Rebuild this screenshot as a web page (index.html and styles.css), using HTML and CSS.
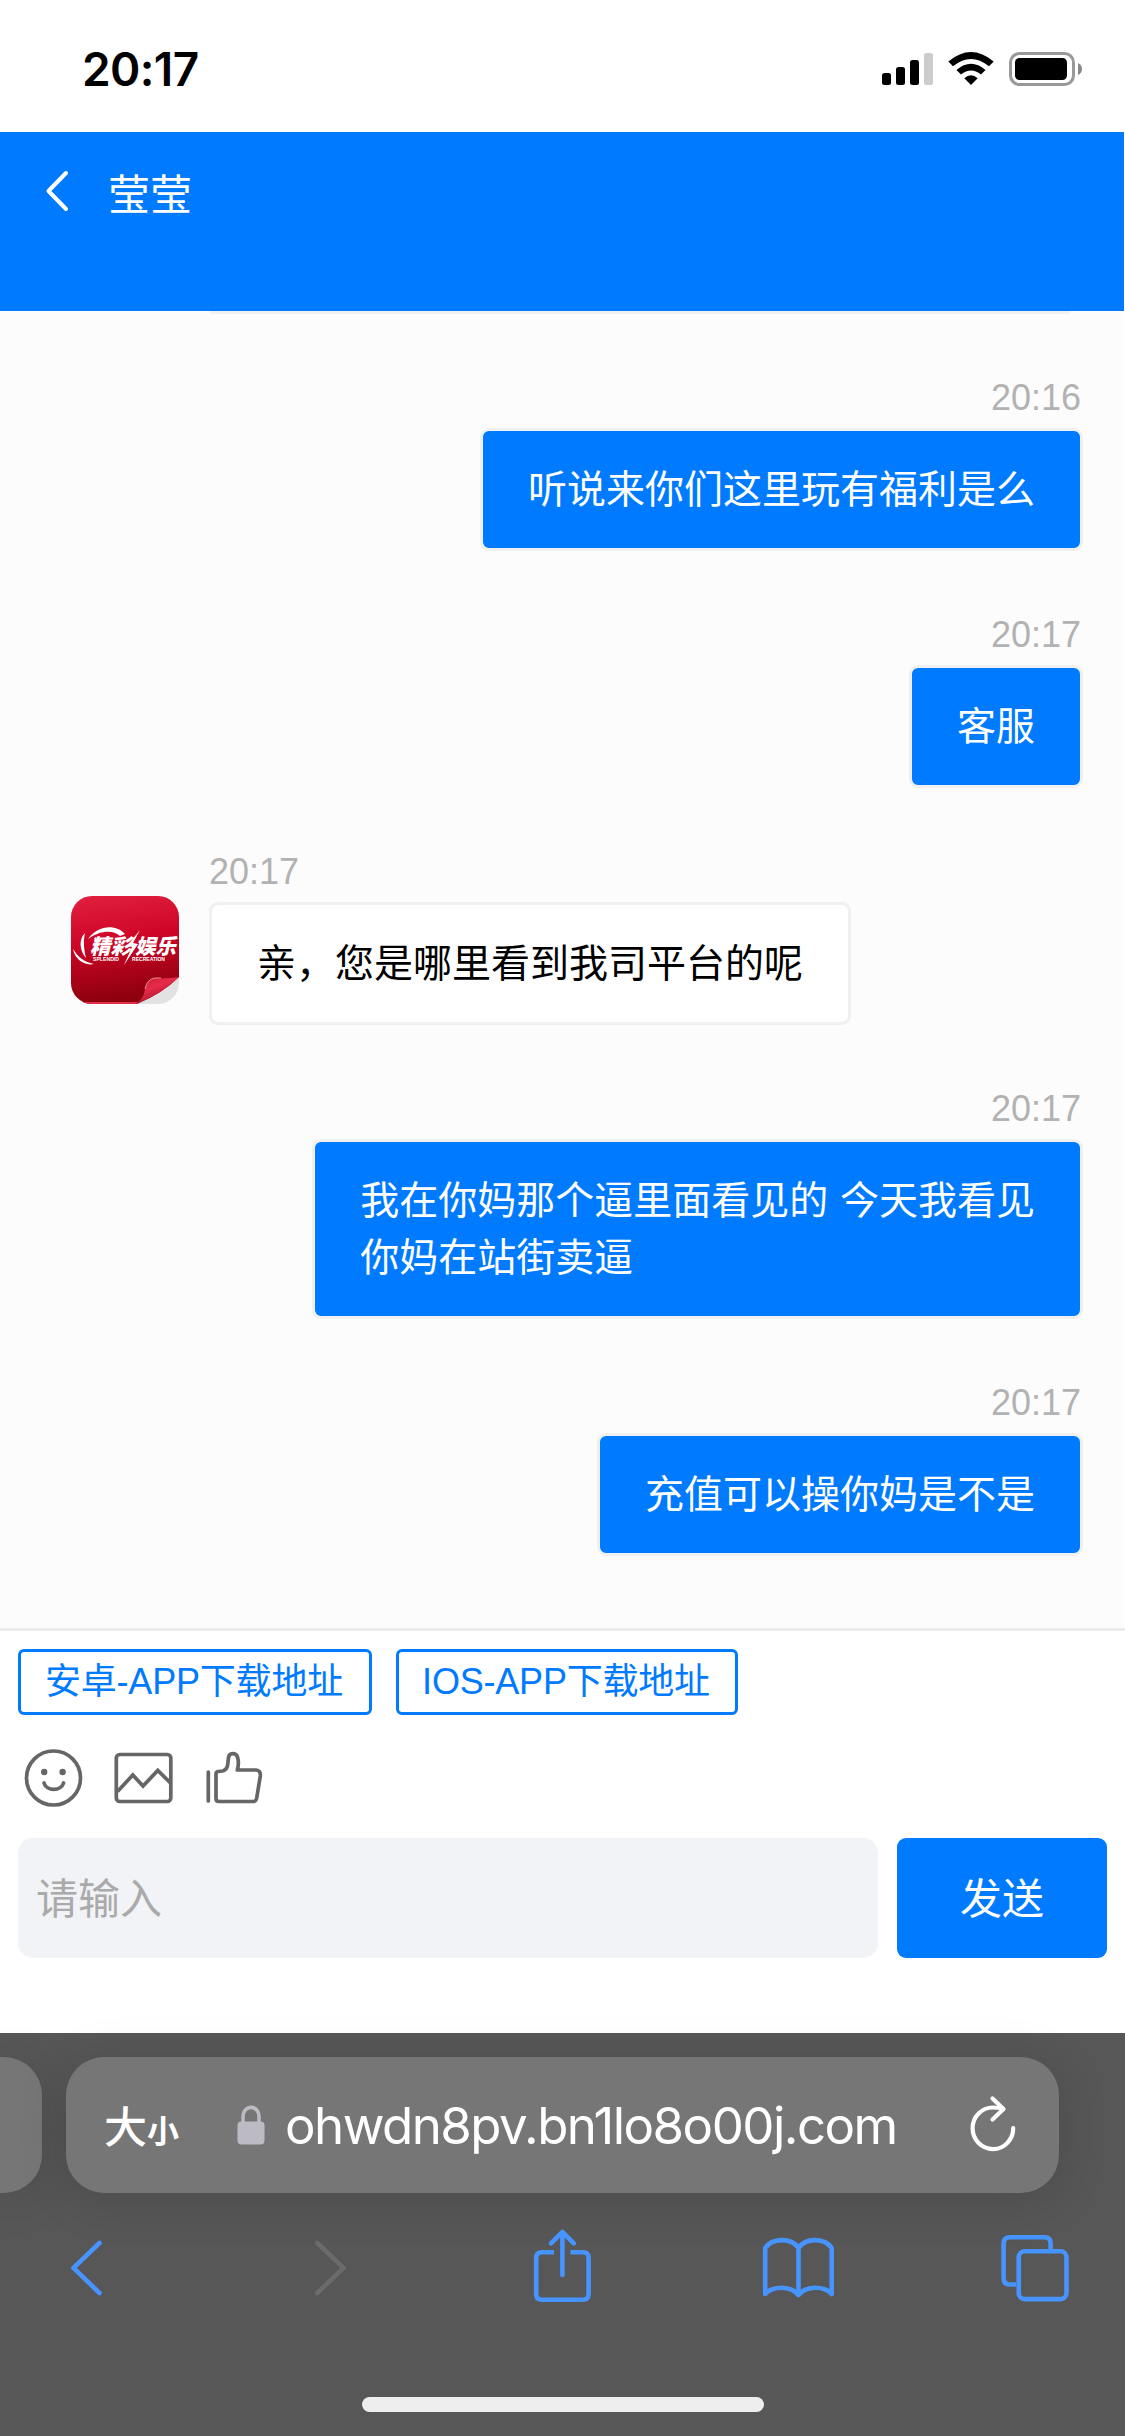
FILE: index.html
```html
<!DOCTYPE html>
<html lang="zh-CN">
<head>
<meta charset="utf-8">
<title>莹莹</title>
<link rel="stylesheet" href="styles.css">
</head>
<body>
<div class="status">
  <span class="clock">20:17</span>
  <svg class="indicators" width="202" height="36" viewBox="881 51 202 36">
    <rect x="882" y="73" width="9" height="12" rx="2.5"/>
    <rect x="896" y="67" width="9" height="18" rx="2.5"/>
    <rect x="910" y="60" width="9" height="25" rx="2.5"/>
    <rect x="924" y="53" width="9" height="32" rx="2.5" fill="#ccc"/>
    <path d="M948.3 61.5Q971 42.500 993.700 61.500L989 66.300Q971 51.500 953 66.300ZM956.500 70Q971 57.500 985.500 70L981 74.500Q971 66.500 961 74.500ZM964.300 78.300Q971 72 977.700 78.300L971 85Z"/>
    <rect x="1010.500" y="53.500" width="63" height="31" rx="9" fill="none" stroke="#999" stroke-width="3"/>
    <rect x="1015" y="58" width="52" height="22" rx="4.500"/>
    <path d="M1078 63Q1082 65 1082 69T1078 75Z" fill="#888"/>
  </svg>
</div>
<header class="header">
  <svg class="back" width="24" height="44" viewBox="45 169 24 44"><path d="M66 173L48.500 191L66 209" fill="none" stroke="#fff" stroke-width="4" stroke-linecap="round" stroke-linejoin="round"/></svg>
  <h1 class="title">莹莹</h1>
</header>
<main class="chat">
  <div class="clipped"></div>
  <section class="msg mine"><time>20:16</time><p>听说来你们这里玩有福利是么</p></section>
  <section class="msg mine"><time>20:17</time><p>客服</p></section>
  <section class="msg theirs">
    <svg class="avatar" width="108" height="108" viewBox="0 0 108 108">
      <defs>
        <linearGradient id="red" x1="0" y1="0" x2=".15" y2="1"><stop offset="0" stop-color="#e0213f"/><stop offset=".45" stop-color="#cf0527"/><stop offset="1" stop-color="#8d000e"/></linearGradient>
        <linearGradient id="curl" x1="0" y1="0" x2=".6" y2="1"><stop offset="0" stop-color="#c81734"/><stop offset=".45" stop-color="#e62b4b"/><stop offset="1" stop-color="#a80c22"/></linearGradient>
        <clipPath id="tile"><rect width="108" height="108" rx="21"/></clipPath>
      </defs>
      <g clip-path="url(#tile)">
        <rect width="108" height="108" fill="#e2e2e2"/>
        <path d="M0 0H108V81Q92 97 66 108H0Z" fill="url(#red)"/>
        <path d="M0 107H66" stroke="#e0304a" stroke-width="2"/>
        <path d="M108 81Q95 83 84 82Q76 83 74 93Q73 103 64 108Q90 99 108 81Z" fill="url(#curl)"/>
        <path d="M90 82H84Q76 83 74 93" fill="none" stroke="#e98a98" stroke-width="1"/>
      </g>
      <g fill="#fff">
        <path d="M17 43C26 30 44 27 54 38L49 40C42 33 27 35 17 43Z"/>
        <path d="M14 37C7 44 9 55 15 62C13 53 12 46 14 37Z"/>
        <path d="M2 53C4 64 14 70 23 68C13 66 7 61 2 53Z"/>
        <path d="M69 34L56 50L61 51L53 69L67 48L62 47Z"/>
      </g>
      <g class="logo-text" fill="#fff"><text x="19" y="58" textLength="41" lengthAdjust="spacingAndGlyphs">精彩</text><text x="64" y="58" textLength="41" lengthAdjust="spacingAndGlyphs">娱乐</text></g>
      <g class="logo-sub" fill="#fff"><text x="22" y="65" textLength="26" lengthAdjust="spacingAndGlyphs">SPLENDID</text><text x="61" y="65" textLength="33" lengthAdjust="spacingAndGlyphs">RECREATION</text></g>
    </svg>
    <div class="body"><time>20:17</time><p>亲，您是哪里看到我司平台的呢</p></div>
  </section>
  <section class="msg mine"><time>20:17</time><p>我在你妈那个逼里面看见的 今天我看见<br>你妈在站街卖逼</p></section>
  <section class="msg mine"><time>20:17</time><p>充值可以操你妈是不是</p></section>
</main>
<footer class="composer">
  <div class="links"><a class="link android">安卓-APP下载地址</a><a class="link ios">IOS-APP下载地址</a></div>
  <svg class="tools" width="246" height="62" viewBox="18 1747 246 62" fill="none" stroke="#666" stroke-width="3.700">
    <circle cx="53.500" cy="1778" r="27"/>
    <circle cx="44.200" cy="1772" r="3.200" fill="#666" stroke="none"/><circle cx="62.600" cy="1772" r="3.200" fill="#666" stroke="none"/>
    <path d="M44 1783C46.500 1791.500 61 1791.500 63.600 1783" stroke-linecap="round"/>
    <rect x="116.300" y="1754.500" width="54.500" height="47" rx="3.500"/>
    <path d="M117.500 1791.500L132.800 1775L143 1786L157.800 1770.500L170.500 1783"/>
    <path d="M208.300 1772V1801" stroke-linecap="round"/>
    <path d="M216 1774Q216 1772 218 1771.500L222.500 1771Q227 1770 227.700 1764.500L228.500 1757.500C229 1752.500 236 1752.500 237.500 1757C239 1762 238.500 1766 237.300 1770H256Q260.800 1770.300 260.300 1776L256.700 1798Q256 1801.500 253.500 1801.500H219Q216 1801.500 216 1798.500Z" stroke-linejoin="round"/>
  </svg>
  <div class="entry"><div class="field">请输入</div><div class="send">发送</div></div>
</footer>
<div class="browser">
  <div class="tabs">
    <div class="prev-tab"></div>
    <div class="url-bar">
      <span class="text-size"><span class="big">大</span><span class="small">小</span></span>
      <svg class="lock" width="28" height="41" viewBox="0 0 28 41"><path d="M6 20V12C6 -.800 22 -.800 22 12V20" fill="none" stroke="#bcbac3" stroke-width="3.600"/><rect x=".500" y="16.500" width="27" height="23" rx="4" fill="#bcbac3"/></svg>
      <span class="host">ohwdn8pv.bn1lo8o00j.com</span>
      <svg class="reload" width="48" height="58" viewBox="969 2095 48 58" fill="none" stroke="#fff" stroke-width="4.200" stroke-linecap="round" stroke-linejoin="round"><path d="M1013.200 2128A20.300 20.800 0 1 1 993 2107.500Q998 2107.500 1003 2109M992.500 2098.500L1003.500 2109L992.500 2119.500"/></svg>
    </div>
  </div>
  <svg class="toolbar" width="1125" height="80" viewBox="0 2226 1125 80" fill="none" stroke="#4794ff" stroke-width="4.600" stroke-linecap="round" stroke-linejoin="round">
    <path d="M99.500 2243L73.500 2267.800L99.500 2293"/>
    <path d="M317.300 2243L343.500 2267.800L317.300 2293" stroke="#6b6b6b"/>
    <path d="M554 2252.300H542Q536.200 2252.300 536.200 2258V2294Q536.200 2299.800 542 2299.800H582.800Q588.600 2299.800 588.600 2294V2258Q588.600 2252.300 582.800 2252.300H570.500" stroke-linecap="butt"/>
    <path d="M562.400 2275V2233M551 2243.300L562.400 2232L573.800 2243.300"/>
    <path d="M798.500 2248C791 2237 772 2238 765.200 2248V2294C773 2285.500 791 2285.500 798.500 2295C806 2285.500 824 2285.500 831.700 2294V2248C825 2238 806 2237 798.500 2248V2295"/>
    <path d="M1016 2284.500H1010Q1003.600 2284.500 1003.600 2278.500V2243.500Q1003.600 2237.300 1010 2237.300H1044.500Q1050.600 2237.300 1050.600 2243.500V2249" stroke-linecap="butt"/>
    <rect x="1018.700" y="2251.300" width="47.800" height="47.800" rx="6"/>
  </svg>
  <div class="home"></div>
</div>
</body>
</html>
```
FILE: styles.css
```css
* { box-sizing: border-box; }
body {
  margin: 0;
  width: 1125px;
  height: 2436px;
  display: flex;
  flex-direction: column;
  overflow: hidden;
  background: #fff;
  font-family: "Liberation Sans", "Noto Sans CJK SC", sans-serif;
}
svg { display: block; flex: none; }
h1, p { margin: 0; font-weight: 400; }

.status {
  height: 132px;
  flex: none;
  display: flex;
  justify-content: space-between;
  padding: 51px 42px 0 82px;
}
.clock {
  font: 600 46px/36px Inter, sans-serif;
  letter-spacing: -0.6px;
}

.header {
  width: 1124px;
  height: 179px;
  flex: none;
  display: flex;
  padding: 37px 0 0 45px;
  gap: 39px;
  background: #007aff;
  color: #fff;
}
.title {
  padding-top: 2px;
  font-size: 42px;
  line-height: 50px;
}

.chat {
  width: 1124px;
  height: 1317px;
  flex: none;
  background: #fcfcfc;
  padding: 0 41px 0 71px;
}
.clipped {
  height: 3px;
  width: 860px;
  margin: 0 0 0 139px;
  background: #f1f1f1;
  border-radius: 0 0 8px 8px;
}
.msg {
  margin-bottom: 62px;
  display: flex;
}
.clipped + .msg { margin-top: 62px; }
.mine { flex-direction: column; align-items: flex-end; }
.theirs { align-items: flex-start; gap: 30px; }
.avatar { margin-top: 46px; }
.msg time {
  display: block;
  height: 52px;
  padding-top: 1px;
  font-size: 36px;
  line-height: 42px;
  color: #b2b2b2;
}
.mine time { padding-right: 2px; }
.msg p {
  border: 3px solid #f0f0f0;
  border-radius: 9px;
  padding: 30px 45px;
  font-size: 39px;
  line-height: 57px;
  word-spacing: 1px;
  white-space: nowrap;
  background: #fff;
  color: #000;
}
.mine p { background: #007aff; color: #fff; }
.logo-text { font: italic 900 21px "Noto Sans CJK SC", sans-serif; }
.logo-sub { font: bold 5px "Liberation Sans", sans-serif; }

.composer {
  height: 405px;
  flex: none;
  border-top: 3px solid #ececec;
  padding: 18px 18px 0;
}
.links { display: flex; gap: 24px; }
.link {
  height: 66px;
  border: 3px solid #007aff;
  border-radius: 6px;
  padding-right: 2px;
  color: #007aff;
  font-size: 36px;
  line-height: 60px;
  letter-spacing: -0.2px;
  text-align: center;
  white-space: nowrap;
}
.android { width: 354px; }
.ios { width: 342px; }
.tools { margin-top: 32px; }
.entry { display: flex; gap: 19px; margin-top: 29px; height: 120px; }
.field {
  width: 860px;
  border-radius: 15px;
  background: #f2f3f7;
  color: #aaa;
  font-size: 42px;
  line-height: 123px;
  padding-left: 18px;
}
.send {
  width: 210px;
  border-radius: 9px;
  background: #007aff;
  color: #fff;
  font-size: 42px;
  line-height: 123px;
  text-align: center;
}

.browser {
  flex: 1;
  background: #575757;
  padding-top: 24px;
}
.tabs { display: flex; gap: 24px; height: 136px; }
.prev-tab, .url-bar {
  background: #767676;
  box-shadow: 0 6px 50px rgba(0, 0, 0, 0.14);
}
.prev-tab { width: 42px; border-radius: 0 38px 38px 0; }
.url-bar {
  width: 993px;
  border-radius: 38px;
  display: flex;
  align-items: flex-start;
  color: #fff;
}
.text-size {
  width: 171px;
  padding: 37px 0 0 38px;
  display: flex;
  align-items: baseline;
  line-height: 60px;
  font-family: "Noto Sans CJK SC", sans-serif;
}
.big { font-size: 43px; font-weight: 500; }
.small { font-size: 32px; font-weight: 700; }
.lock { margin-top: 48px; }
.host {
  width: 640px;
  padding: 39px 0 0 20px;
  font: 400 51px/60px Inter, sans-serif;
  letter-spacing: -1.52px;
  white-space: nowrap;
}
.reload { margin: 38px 0 0 64px; }
.toolbar { margin-top: 33px; }
.home {
  width: 402px;
  height: 15px;
  border-radius: 8px;
  margin: 91px 0 0 362px;
  background: #eee;
}
```
